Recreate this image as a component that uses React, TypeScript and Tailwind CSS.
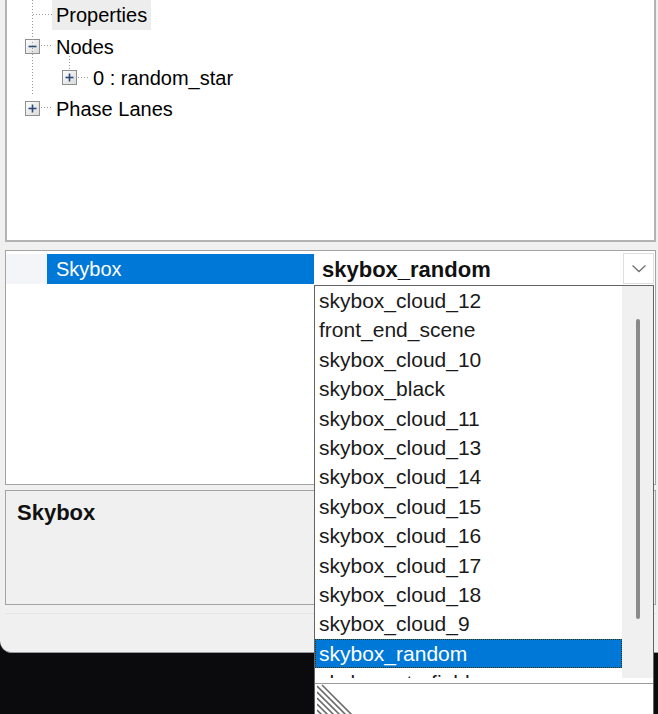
import React from "react";

const items = [
  "skybox_cloud_12",
  "front_end_scene",
  "skybox_cloud_10",
  "skybox_black",
  "skybox_cloud_11",
  "skybox_cloud_13",
  "skybox_cloud_14",
  "skybox_cloud_15",
  "skybox_cloud_16",
  "skybox_cloud_17",
  "skybox_cloud_18",
  "skybox_cloud_9",
  "skybox_random",
  "skybox_starfield",
];

function ExpandBox({ plus }: { plus: boolean }) {
  return (
    <svg width="15" height="15" viewBox="0 0 15 15" className="shrink-0">
      <defs>
        <linearGradient id="bx" x1="0" y1="0" x2="1" y2="1">
          <stop offset="0" stopColor="#ffffff" />
          <stop offset="1" stopColor="#d8d8d8" />
        </linearGradient>
      </defs>
      <rect x="0.5" y="0.5" width="14" height="14" fill="url(#bx)" stroke="#8f8f8f" />
      <line x1="3.5" y1="7.5" x2="11.5" y2="7.5" stroke="#2b4a78" strokeWidth="1.6" />
      {plus && <line x1="7.5" y1="3.5" x2="7.5" y2="11.5" stroke="#2b4a78" strokeWidth="1.6" />}
    </svg>
  );
}

export default function App() {
  return (
    <div
      className="relative w-[658px] h-[714px] bg-[#0b0b0e] overflow-hidden"
      style={{ fontFamily: '"Liberation Sans", Arial, sans-serif' }}
    >
      {/* window */}
      <div className="h-[653px] bg-[#f0f0f0] rounded-bl-[12px] border-b border-[#9a9a9a] flex flex-col pl-[5px] pr-[2px]">
        {/* tree panel */}
        <div className="relative h-[242px] shrink-0 border-x-2 border-b-2 border-[#b3b3b3] bg-white text-[20px] text-black">
          <svg className="absolute left-0 top-0" width="120" height="120">
            <g stroke="#9a9a9a" strokeWidth="1" strokeDasharray="1 2" fill="none">
              <line x1="25.5" y1="0" x2="25.5" y2="96" />
              <line x1="26" y1="14.5" x2="46" y2="14.5" />
              <line x1="34" y1="45.5" x2="46" y2="45.5" />
              <line x1="62.5" y1="53" x2="62.5" y2="69" />
              <line x1="71" y1="77.5" x2="82" y2="77.5" />
              <line x1="34" y1="107.5" x2="46" y2="107.5" />
            </g>
          </svg>
          <div className="flex flex-col pl-[18px]">
            <div className="h-[31px] flex items-center">
              <div className="w-[27px]" />
              <span className="bg-[#ededed] h-[30px] leading-[30px] pl-[4px] pr-[4px] -mt-[1px]">Properties</span>
            </div>
            <div className="h-[31px] flex items-center">
              <ExpandBox plus={false} />
              <span className="ml-[16px]">Nodes</span>
            </div>
            <div className="h-[31px] flex items-center pl-[37px]">
              <ExpandBox plus={true} />
              <span className="ml-[16px]">0 : random_star</span>
            </div>
            <div className="h-[31px] flex items-center">
              <ExpandBox plus={true} />
              <span className="ml-[16px]">Phase Lanes</span>
            </div>
          </div>
        </div>

        {/* property grid */}
        <div className="mt-[8px] h-[235px] shrink-0 border border-[#a3a3a3] bg-white pt-[3px] text-[20px]">
          <div className="flex h-[30px]">
            <div className="w-[41px] bg-[#f3f5f9]" />
            <div className="w-[267px] bg-[#0078d7] text-white pl-[9px] leading-[30px]">Skybox</div>
            <div className="flex-1 flex items-center pl-[8px] font-bold text-[#111] text-[22px]">
              <span className="flex-1">skybox_random</span>
              <div className="w-[31px] h-[31px] -mt-[2px] mr-[1px] border border-[#dedede] bg-white flex items-center justify-center">
                <svg width="16" height="9" viewBox="0 0 16 9">
                  <path d="M1.5 1.5 L8 7.5 L14.5 1.5" stroke="#707070" strokeWidth="1.3" fill="none" />
                </svg>
              </div>
            </div>
          </div>
        </div>

        {/* description */}
        <div className="mt-[5px] h-[115px] shrink-0 border border-[#a3a3a3] bg-[#f0f0f0] pl-[11px] pt-[5px]">
          <span className="text-[22px] font-bold text-[#111]">Skybox</span>
        </div>
        <div className="mt-[8px] border-t border-[#e4e4e4]" />
      </div>

      {/* dropdown list overlay */}
      <div className="absolute left-[314px] top-[285px] w-[340px] h-[440px] border border-[#646464] bg-white flex flex-col">
        <div className="h-[392px] flex shrink-0">
          <div className="flex-1 overflow-hidden text-[21px] text-[#1a1a1a]">
            {items.map((it) => {
              const sel = it === "skybox_random";
              return (
                <div
                  key={it}
                  className={
                    sel
                      ? "h-[29.4px] leading-[28px] pl-[3px] bg-[#0078d7] text-white border border-dotted border-[#3a3000]"
                      : "h-[29.4px] leading-[29.4px] pl-[4px]"
                  }
                >
                  {it}
                </div>
              );
            })}
          </div>
          <div className="w-[31px] bg-[#f0f0f0] flex justify-center pt-[33px]">
            <div className="w-[4px] h-[300px] rounded-full bg-[#8a8a8a]" />
          </div>
        </div>
        <div className="h-[5px] shrink-0" />
        <div className="border-t border-[#9a9a9a] flex-1 relative">
          <svg width="40" height="32" className="absolute left-[2px] top-0">
            <g stroke="#6a6a6a" strokeWidth="1.6">
              <line x1="0" y1="2" x2="30" y2="32" />
              <line x1="0" y1="8" x2="24" y2="32" />
              <line x1="0" y1="14" x2="18" y2="32" />
              <line x1="0" y1="20" x2="12" y2="32" />
              <line x1="0" y1="26" x2="6" y2="32" />
              <line x1="5" y1="1" x2="36" y2="32" />
            </g>
          </svg>
        </div>
      </div>
    </div>
  );
}
